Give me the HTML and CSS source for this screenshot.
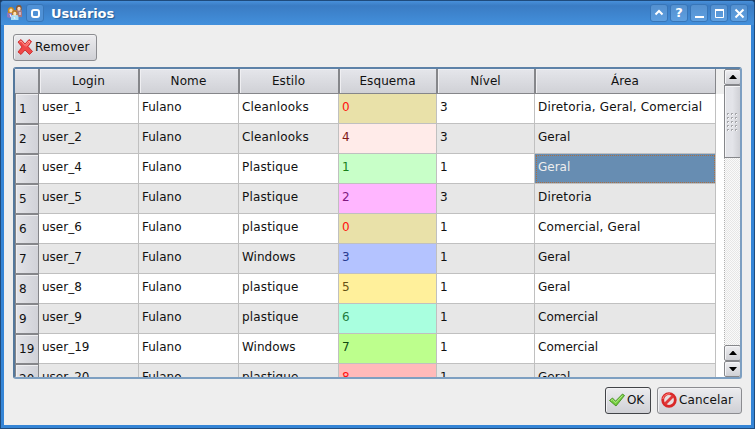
FILE: index.html
```html
<!DOCTYPE html>
<html lang="pt">
<head>
<meta charset="utf-8">
<title>Usuários</title>
<link rel="stylesheet" href="styles.css">
</head>
<body>
<div class="window">
  <header class="titlebar">
    <svg class="users" width="16" height="16" viewBox="0 0 16 16">
      <path d="M0 12V9q0-3 3.500-3t4 3v4H2z" fill="#8e78bb"/>
      <path d="M8 12V7q0-3 4-3 3 0 3 3v5z" fill="#a77980"/>
      <path d="M1 8q-1-6 3-6t3 6z" fill="#c9891f"/>
      <ellipse cx="4" cy="5.500" rx="1.600" ry="2" fill="#ffe0ae"/>
      <path d="M9 5q-.5-5 3-5t2.500 5z" fill="#895832"/>
      <ellipse cx="12" cy="3.800" rx="1.700" ry="2" fill="#ffd8b8"/>
      <path d="M4 15v-3q0-3 3.500-3t4 3v3z" fill="#a5dcf5"/>
      <path d="M5 10q-.5-5 2.800-5t2.700 5z" fill="#b77c2d"/>
      <ellipse cx="7.800" cy="8.800" rx="1.600" ry="2" fill="#ffe2b8"/>
      <path d="M3 9l1 3M13 7v3M7 12l1 2" stroke="#f4eefb" fill="none"/>
    </svg>
    <span class="tbtn first"><svg width="18" height="18" viewBox="0 0 18 18"><rect x="6" y="6" width="7" height="7" rx="2" fill="none" stroke="#fff" stroke-width="2"/></svg></span>
    <h1>Usuários</h1>
    <nav class="controls">
      <span class="tbtn"><svg width="18" height="18" viewBox="0 0 18 18"><path d="M5.500 10.500L9 7l3.500 3.500" fill="none" stroke="#fff" stroke-width="2"/></svg></span>
      <span class="tbtn"><b>?</b></span>
      <span class="tbtn"><svg width="18" height="18" viewBox="0 0 18 18"><path d="M5 13h9" stroke="#fff" stroke-width="2"/></svg></span>
      <span class="tbtn"><svg width="18" height="18" viewBox="0 0 18 18"><path d="M5.500 5v8.500h8V5" fill="none" stroke="#fff"/><path d="M5 6h9" stroke="#fff" stroke-width="2"/></svg></span>
      <span class="tbtn"><svg width="18" height="18" viewBox="0 0 18 18"><path d="M5.500 5.500l8 8M13.500 5.500l-8 8" stroke="#fff" stroke-width="2"/></svg></span>
    </nav>
  </header>
  <main class="content">
    <button class="btn remove"><svg width="16" height="16" viewBox="0 0 16 16"><path d="M1 3l3-2.500L8 5l4-4.500 2.500 2L11 7.500l4.500 5-3 3L8 11l-4 4.500-3-2.500L5 8z" fill="#f04848" stroke="#c51e1e" stroke-width=".8" stroke-linejoin="round"/><path d="M2.500 3L4 2l4 4.500L12 2l1 1-4 4.500" fill="none" stroke="#ff9b94"/></svg><span>Remover</span></button>
    <section class="frame">
      <div class="grid head">
        <div class="h"></div><div class="h">Login</div><div class="h">Nome</div><div class="h">Estilo</div><div class="h">Esquema</div><div class="h">Nível</div><div class="h">Área</div>
      </div>
      <div class="rows">
        <div class="grid row"><div class="n">1</div><div>user_1</div><div>Fulano</div><div class="wide">Cleanlooks</div><div class="s0">0</div><div>3</div><div class="wide">Diretoria, Geral, Comercial</div></div>
        <div class="grid row"><div class="n">2</div><div>user_2</div><div>Fulano</div><div class="wide">Cleanlooks</div><div class="s4">4</div><div>3</div><div>Geral</div></div>
        <div class="grid row"><div class="n">4</div><div>user_4</div><div>Fulano</div><div class="wide">Plastique</div><div class="s1">1</div><div>1</div><div class="selected">Geral</div></div>
        <div class="grid row"><div class="n">5</div><div>user_5</div><div>Fulano</div><div class="wide">Plastique</div><div class="s2">2</div><div>3</div><div class="wide">Diretoria</div></div>
        <div class="grid row"><div class="n">6</div><div>user_6</div><div>Fulano</div><div class="wide">plastique</div><div class="s0">0</div><div>1</div><div class="wide">Comercial, Geral</div></div>
        <div class="grid row"><div class="n">7</div><div>user_7</div><div>Fulano</div><div>Windows</div><div class="s3">3</div><div>1</div><div>Geral</div></div>
        <div class="grid row"><div class="n">8</div><div>user_8</div><div>Fulano</div><div class="wide">plastique</div><div class="s5">5</div><div>1</div><div>Geral</div></div>
        <div class="grid row"><div class="n">9</div><div>user_9</div><div>Fulano</div><div class="wide">plastique</div><div class="s6">6</div><div>1</div><div>Comercial</div></div>
        <div class="grid row"><div class="n">19</div><div>user_19</div><div>Fulano</div><div>Windows</div><div class="s7">7</div><div>1</div><div>Comercial</div></div>
        <div class="grid row"><div class="n">20</div><div>user_20</div><div>Fulano</div><div class="wide">plastique</div><div class="s8">8</div><div>1</div><div>Geral</div></div>
      </div>
      <div class="scrollbar">
        <div class="arrow"><svg width="8" height="4" viewBox="0 0 8 4"><path d="M0 4h8L4.500 0h-1z"/></svg></div>
        <div class="thumb"><svg width="11" height="18" viewBox="0 0 11 18"><defs><pattern id="grip" width="4" height="4" patternUnits="userSpaceOnUse"><path d="M0 .5h2M.5 0v2" stroke="#a6a7ab"/><path d="M1 1.500h1" stroke="#fff"/></pattern></defs><rect width="11" height="18" fill="url(#grip)"/></svg></div>
        <div class="track"></div>
        <div class="arrow"><svg width="8" height="4" viewBox="0 0 8 4"><path d="M0 4h8L4.500 0h-1z"/></svg></div>
        <div class="arrow"><svg width="8" height="4" viewBox="0 0 8 4"><path d="M0 0h8L4.500 4h-1z"/></svg></div>
      </div>
    </section>
    <footer class="actions">
      <button class="btn ok"><svg width="16" height="16" viewBox="0 0 16 16"><path d="M.5 8.500L3.500 6l3 3.200L13.500 2l2 1.500L7 14z" fill="#70cb3a" stroke="#458d23" stroke-width=".9" stroke-linejoin="round"/><path d="M2 8.500l1.300-.9 3.300 3.200 7-7.300" fill="none" stroke="#b9ef91"/></svg><span>OK</span></button>
      <button class="btn cancel"><svg width="16" height="16" viewBox="0 0 16 16"><circle cx="8" cy="8" r="6.300" fill="#e8dfe0" stroke="#d92828" stroke-width="2.800"/><path d="M4 12l8-8" stroke="#e03838" stroke-width="2.800"/><path d="M1.800 7Q3 2 9 1.800" fill="none" stroke="#ff8580"/></svg><span>Cancelar</span></button>
    </footer>
  </main>
</div>
</body>
</html>
```
FILE: styles.css
```css
* { box-sizing: border-box; }
body { margin: 0; overflow: hidden; background: #1d3b62; font: 12px/16px "DejaVu Sans", sans-serif; color: #111; }
svg { display: block; flex: none; }
.window { width: 755px; height: 429px; border: 1px solid #1f4b7c; border-radius: 4px 4px 0 0; background: #3585d6; padding: 0 3px 3px; overflow: hidden; }
.titlebar { height: 24px; margin: 0 -3px; padding: 3px 6px 0 6px; display: flex; background: linear-gradient(#4890da, #3a7cc4 20%, #4390dc); }
.users { margin-top: 1px; }
.tbtn { width: 18px; height: 18px; border: 1px solid #3876b8; border-radius: 3px; background: linear-gradient(#5490cf, #5e9fe0); display: flex; align-items: center; justify-content: center; color: #fff; }
.tbtn svg { margin: -1px; }
.tbtn b { font-size: 13px; line-height: 16px; }
.first { margin-left: 3px; background: #4f91d6; }
h1 { margin: 2px 0 0 7px; font-size: 13px; line-height: 16px; letter-spacing: -.1px; color: #fff; text-shadow: 1px 1px 1px #255b94; }
.controls { display: flex; gap: 2px; margin-left: auto; }
.content { height: 400px; background: #eee; padding: 9px 9px 0; }
.btn { height: 27px; border: 1px solid #8b8c90; border-radius: 3px; background: linear-gradient(#ececef, #cfd0d5); box-shadow: inset 1px 1px #f2f2f4; padding: 0 0 1px 3px; font: inherit; color: #111; display: flex; align-items: center; gap: 2px; letter-spacing: .15px; }
.remove { width: 84px; }
.frame { position: relative; width: 729px; height: 312px; margin-top: 6px; border: 2px solid #7d9fc1; border-top-color: #5d82a8; border-left-color: #54789c; border-radius: 3px; background: #fff; overflow: hidden; }
.grid { display: grid; grid-template-columns: 24px 100px 100px 100px 98px 98px 181px; width: 701px; }
.head { height: 25px; margin-left: -1px; width: 702px; grid-template-columns: 25px 100px 100px 100px 98px 98px 181px; box-shadow: 8px 0 #eee; }
.h { background: linear-gradient(#e5e6eb, #d0d1d6); border-right: 1px solid #85868a; border-bottom: 1px solid #85868a; border-left: 1px solid #85868a; box-shadow: inset 1px 1px #efeff2; text-align: center; line-height: 24px; padding-right: 1px; letter-spacing: .1px; }
.h:first-child { border-left: 0; }
.rows { height: 283px; overflow: hidden; }
.row { height: 30px; }
.row > div { border-right: 1px solid #c0c0c0; border-bottom: 1px solid #c0c0c0; padding: 5px 0 0 3px; white-space: nowrap; }
.row > .wide { letter-spacing: .16px; }
.row:nth-child(even) { background: #e7e7e7; }
.row > .n { background: linear-gradient(90deg, #e2e3e8, #d1d2d8); border-top: 1px solid #85868a; border-left: 1px solid #85868a; border-right: 1px solid #85868a; border-bottom: 1px solid #85868a; box-shadow: inset 1px 1px #efeff2; padding-top: 6px; }
.row:first-child > .n { border-top: 0; padding-top: 7px; }
.row > .s0 { background: #e9e1a9; color: #f11; }
.row > .s1 { background: #c8ffc8; color: #198019; }
.row > .s2 { background: #ffb6ff; color: #801980; }
.row > .s3 { background: #b4c3ff; color: #283b91; }
.row > .s4 { background: #ffebe9; color: #801919; }
.row > .s5 { background: #fff09b; color: #645014; }
.row > .s6 { background: #a9ffdf; color: #237d41; }
.row > .s7 { background: #bdff8d; color: #124b12; }
.row > .s8 { background: #ffbaba; color: #f11; }
.row > .selected { background: #678db2; color: #eee; outline: 1px dotted #a96f42; outline-offset: -2px; }
.scrollbar { position: absolute; right: -1px; top: 0; width: 17px; height: 308px; display: flex; flex-direction: column; }
.arrow { height: 16px; border: 1px solid #85868a; border-radius: 2px; background: linear-gradient(#eeeef1, #cfd0d5); box-shadow: inset 1px 1px #f5f5f7; display: flex; align-items: center; justify-content: center; }
.thumb { height: 73px; border: 1px solid #85868a; background: linear-gradient(90deg, #e2e3e8, #e3e4e9 50%, #cfd0d5); box-shadow: inset 1px 1px #f4f4f6; display: flex; align-items: center; justify-content: center; }
.track { flex: 1; border-left: 1px dotted #b0b0b0; background: repeating-conic-gradient(#e6e6e6 0 25%, #fafafa 0 50%) 0 0 / 2px 2px; }
.actions { display: flex; justify-content: flex-end; gap: 6px; margin-top: 8px; }
.ok { width: 46px; border-color: #424448; letter-spacing: -.2px; }
.cancel { width: 85px; }
```
